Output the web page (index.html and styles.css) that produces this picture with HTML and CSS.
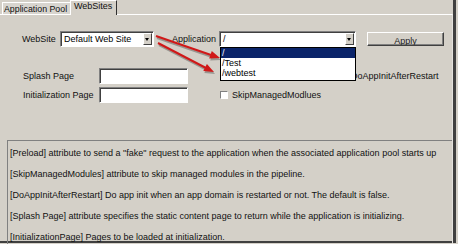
FILE: index.html
```html
<!DOCTYPE html>
<html>
<head>
<meta charset="utf-8">
<link rel="stylesheet" href="styles.css">
</head>
<body>
<div class="window">
  <div class="tabs">
    <div class="tab">Application Pool</div>
    <div class="tab active">WebSites</div>
  </div>
  <div class="panel">
    <div class="row1">
      <span class="lbl lbl-site">WebSite</span>
      <div class="select sel-site"><span class="val">Default Web Site</span><span class="arrow"></span></div>
      <span class="lbl lbl-app">Application</span>
      <div class="select sel-app"><span class="val">/</span><span class="arrow"></span>
        <ul class="dropdown">
          <li class="sel">/</li>
          <li>/Test</li>
          <li>/webtest</li>
        </ul>
      </div>
      <div class="btn"><span>Apply</span></div>
    </div>
    <div class="row2">
      <div class="fields">
        <div class="field"><span class="flbl">Splash Page</span><div class="input"></div></div>
        <div class="field"><span class="flbl">Initialization Page</span><div class="input"></div></div>
      </div>
      <div class="checks">
        <div class="chk"><span class="box"></span>Preload</div>
        <div class="chk"><span class="box"></span>DoAppInitAfterRestart</div>
        <div class="chk"><span class="box"></span>SkipManagedModlues</div>
      </div>
    </div>
    <div class="info">
      <p>[Preload] attribute to send a "fake" request to the application when the associated application pool starts up</p>
      <p>[SkipManagedModules] attribute to skip managed modules in the pipeline.</p>
      <p>[DoAppInitAfterRestart] Do app init when an app domain is restarted or not. The default is false.</p>
      <p>[Splash Page] attribute specifies the static content page to return while the application is initializing.</p>
      <p>[InitializationPage] Pages to be loaded at initialization.</p>
    </div>
  </div>
  <svg class="arrows" width="456" height="243" viewBox="0 0 456 243">
    <g fill="rgba(0,0,0,0.28)" stroke="rgba(0,0,0,0.28)">
      <line x1="157" y1="38" x2="212" y2="57" stroke-width="2"/>
      <polygon points="221,60 210.2,60.5 212.8,53" stroke="none"/>
      <line x1="159" y1="45" x2="207" y2="70" stroke-width="2"/>
      <polygon points="215,74 204.3,73 207.9,65.9" stroke="none"/>
    </g>
    <g fill="#d01818" stroke="#d01818">
      <line x1="156" y1="36" x2="211" y2="55" stroke-width="2"/>
      <polygon points="220,58 209.2,58.5 211.8,51" stroke="none"/>
      <line x1="158" y1="43" x2="206" y2="68" stroke-width="2"/>
      <polygon points="214,72 203.3,71 206.9,63.9" stroke="none"/>
    </g>
  </svg>
</div>
</body>
</html>
```

FILE: styles.css
```css
* { box-sizing: border-box; margin: 0; padding: 0; }
html, body { width: 458px; height: 244px; overflow: hidden; }
body {
  background: #d4d0c8;
  font-family: "Liberation Sans", Arial, sans-serif;
  font-size: 9px;
  color: #000;
}
.window {
  position: relative;
  width: 456px;
  height: 243px;
  border-right: 3px solid #404040;
  border-bottom: 2px solid #404040;
  display: flex;
  flex-direction: column;
  background: #d4d0c8;
}
.tabs {
  height: 14px;
  display: flex;
  align-items: flex-end;
  padding-left: 2px;
}
.tab {
  height: 12px;
  padding-left: 1px;
  line-height: 12px;
  border-top: 1px solid #fff;
  border-left: 1px solid #fff;
  color: #111;
  width: 68px;
  white-space: nowrap;
  font-size: 8.8px;
  background: #d8d5cf;
}
.tab.active {
  height: 15px;
  margin-bottom: -1px;
  width: 47px;
  font-size: 9px;
  line-height: 11px;
  padding-left: 3px;
  border-right: 1px solid #303030;
  background: #d4d0c8;
  position: relative;
  z-index: 1;
}
.panel {
  flex: 1;
  border-top: 1px solid #fff;
  border-right: 1px solid #e4e2de;
  display: flex;
  flex-direction: column;
}
.row1 {
  margin-top: 16px;
  height: 16px;
  display: flex;
  align-items: center;
  padding-left: 22px;
}
.lbl { color: #111; }
.lbl-site { width: 38px; }
.lbl-app { width: 47px; margin-left: 18px; }
.select {
  position: relative;
  height: 16px;
  background: #fff;
  border-top: 1px solid #808080;
  border-left: 1px solid #808080;
  border-bottom: 1px solid #fff;
  border-right: 1px solid #fff;
  box-shadow: inset 1px 1px 0 #404040;
  display: flex;
  align-items: center;
  padding-left: 3px;
}
.sel-site { width: 94px; }
.sel-app { width: 137px; }
.val { flex: 1; line-height: 12px; }
.arrow {
  width: 9px;
  height: 12px;
  margin-right: 1px;
  background: #d4d0c8;
  border-top: 1px solid #fff;
  border-left: 1px solid #fff;
  border-right: 1px solid #404040;
  border-bottom: 1px solid #404040;
  position: relative;
}
.arrow::after {
  content: "";
  position: absolute;
  left: 1px;
  top: 4px;
  border-left: 2.5px solid transparent;
  border-right: 2.5px solid transparent;
  border-top: 3px solid #000;
}
.dropdown {
  position: absolute;
  top: 15px;
  left: 0;
  width: 136px;
  list-style: none;
  background: #fff;
  border: 1px solid #000;
  padding-bottom: 2px;
  z-index: 5;
}
.dropdown li {
  height: 10px;
  line-height: 10px;
  padding-left: 1px;
}
.dropdown li.sel {
  background: #0a246a;
  color: #fff;
}
.btn {
  margin-left: 11px;
  width: 77px;
  height: 14px;
  border-top: 1px solid #fff;
  border-left: 1px solid #fff;
  border-right: 1px solid #404040;
  border-bottom: 1px solid #404040;
  box-shadow: inset -1px -1px 0 #808080;
  overflow: hidden;
  text-align: center;
  line-height: 17px;
  color: #222;
}
.row2 {
  margin-top: 21px;
  display: flex;
}
.fields {
  padding-left: 23px;
  display: flex;
  flex-direction: column;
  gap: 3px;
}
.field {
  display: flex;
  align-items: center;
  height: 16px;
}
.flbl { width: 76px; color: #111; }
.input {
  width: 89px;
  height: 16px;
  background: #fff;
  border-top: 1px solid #808080;
  border-left: 1px solid #808080;
  border-bottom: 1px solid #fff;
  border-right: 1px solid #fff;
  box-shadow: inset 1px 1px 0 #404040;
}
.checks {
  margin-left: 32px;
  display: grid;
  grid-template-columns: 119px auto;
  grid-auto-rows: 16px;
  row-gap: 3px;
  align-content: start;
}
.chk {
  display: flex;
  align-items: center;
  color: #111;
}
.box {
  width: 8px;
  height: 8px;
  margin-right: 4px;
  background: #fff;
  border-top: 1px solid #808080;
  border-left: 1px solid #808080;
  border-bottom: 1px solid #fff;
  border-right: 1px solid #fff;
}
.info {
  flex: 1;
  margin-top: 37px;
  margin-left: 7px;
  border-top: 1px solid #808080;
  border-left: 1px solid #808080;
  padding: 2px 0 0 2px;
  overflow: hidden;
}
.info p {
  line-height: 21px;
  white-space: nowrap;
  color: #111;
}
.arrows {
  position: absolute;
  left: 0;
  top: 0;
  pointer-events: none;
  z-index: 10;
}
```
